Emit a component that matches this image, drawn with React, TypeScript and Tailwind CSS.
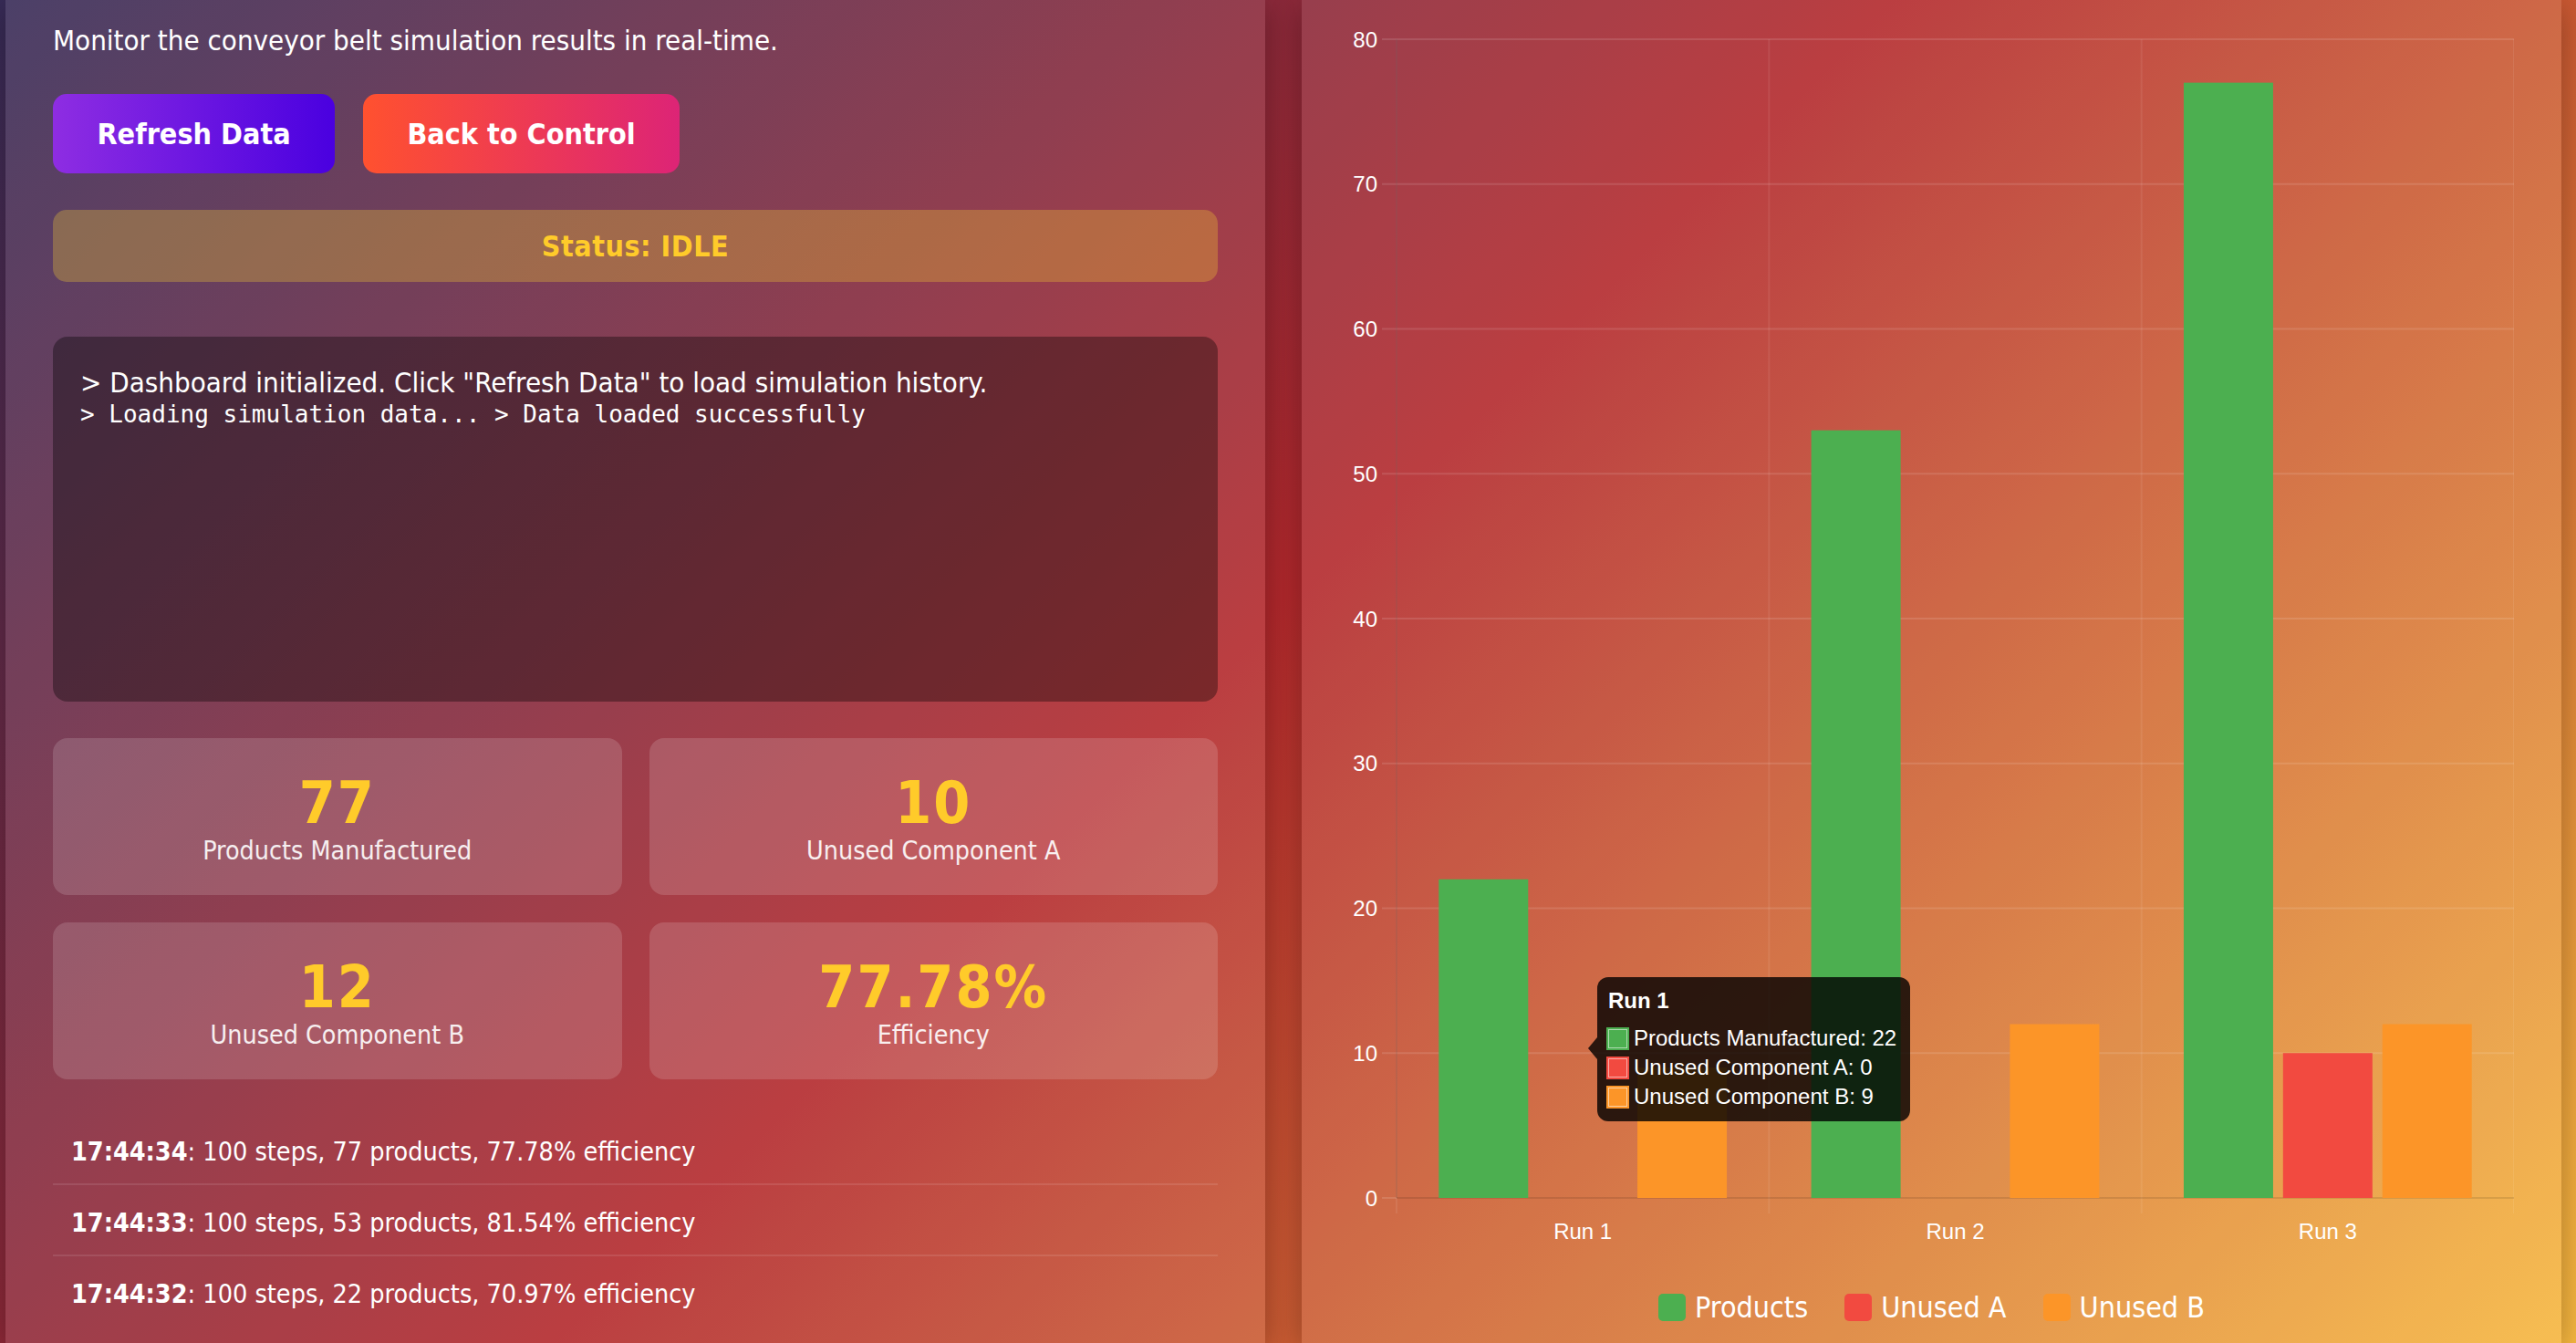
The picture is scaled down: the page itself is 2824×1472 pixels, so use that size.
import React from "react";

const runs = [
  { label: "Run 1", products: 22, a: 0, b: 9 },
  { label: "Run 2", products: 53, a: 0, b: 12 },
  { label: "Run 3", products: 77, a: 10, b: 12 },
];

const history = [
  { time: "17:44:34", steps: 100, products: 77, eff: "77.78" },
  { time: "17:44:33", steps: 100, products: 53, eff: "81.54" },
  { time: "17:44:32", steps: 100, products: 22, eff: "70.97" },
];

const stats = [
  { value: "77", label: "Products Manufactured" },
  { value: "10", label: "Unused Component A" },
  { value: "12", label: "Unused Component B" },
  { value: "77.78%", label: "Efficiency" },
];

const GREEN = "#4caf50";
const RED = "#f24a40";
const ORANGE = "#fc9528";

// chart geometry (svg coordinates)
const W = 1277;
const H = 1404;
const left = 52;
const right = 1277;
const top = 43;
const zero = 1313;
const unit = (zero - top) / 80;
const catW = (right - left) / 3;
const slot = (catW * 0.8) / 3;
const barW = slot * 0.9;

function Chart() {
  const ticks = [0, 10, 20, 30, 40, 50, 60, 70, 80];
  return (
    <svg width={W} height={H} className="block font-['Liberation_Sans',Arial,sans-serif]">
      {[0, 1, 2, 3].map((i) => {
        const x = left + i * catW;
        return (
          <line key={"v" + i} x1={x} x2={x} y1={top} y2={zero + 17} stroke="rgba(255,255,255,0.08)" strokeWidth={2} />
        );
      })}
      {ticks.map((t) => {
        const y = zero - t * unit;
        return (
          <g key={t}>
            <line x1={36} x2={left} y1={y} y2={y} stroke="rgba(255,255,255,0.12)" strokeWidth={2} />
            <line
              x1={left}
              x2={right}
              y1={y}
              y2={y}
              stroke={t === 0 ? "rgba(0,0,0,0.1)" : "rgba(255,255,255,0.12)"}
              strokeWidth={2}
            />
            <text x={31} y={y + 8.5} textAnchor="end" fill="#fff" fontSize={24}>
              {t}
            </text>
          </g>
        );
      })}
      <line x1={left} x2={left} y1={top} y2={zero} stroke="rgba(0,0,0,0.1)" strokeWidth={2} />
      {runs.map((r, i) => {
        const x0 = left + i * catW + catW * 0.1;
        const vals = [
          { v: r.products, c: GREEN },
          { v: r.a, c: RED },
          { v: r.b, c: ORANGE },
        ];
        return (
          <g key={r.label}>
            {vals.map((d, j) =>
              d.v > 0 ? (
                <rect
                  key={j}
                  x={x0 + j * slot + (slot - barW) / 2}
                  y={zero - d.v * unit}
                  width={barW}
                  height={d.v * unit}
                  fill={d.c}
                />
              ) : null
            )}
            <text x={left + (i + 0.5) * catW} y={1358} textAnchor="middle" fill="#fff" fontSize={24}>
              {r.label}
            </text>
          </g>
        );
      })}
    </svg>
  );
}

function TipRow({ color, text }: { color: string; text: string }) {
  return (
    <div className="flex items-center gap-[5px] h-[28px]">
      <span
        className="w-[25px] h-[25px] border-2 shadow-[inset_0_0_0_1px_rgba(255,255,255,0.55)]"
        style={{ backgroundColor: color, borderColor: color }}
      />
      <span>{text}</span>
    </div>
  );
}

function LegendItem({ color, label }: { color: string; label: string }) {
  return (
    <div className="flex items-center gap-[10px]">
      <span className="w-[30px] h-[30px] rounded-[5px]" style={{ backgroundColor: color }} />
      <span className="text-[32px] text-white">{label}</span>
    </div>
  );
}

export default function App() {
  return (
    <div className="h-[1472px] w-full overflow-hidden bg-[linear-gradient(135deg,#372b57_0%,#b2282c_48%,#f6b73f_100%)] font-['DejaVu_Sans_Condensed','DejaVu_Sans',sans-serif] font-stretch-condensed">
      <div className="grid grid-cols-2 gap-[40px] pl-[6px] pr-[16px] h-full">
        {/* left: controls + stats */}
        <div className="bg-white/10 shadow-[0_8px_32px_rgba(0,0,0,0.3)] px-[52px] pt-[20px] flex flex-col">
          <p className="text-[31px] leading-[48px] text-white">
            Monitor the conveyor belt simulation results in real-time.
          </p>
          <div className="mt-[35px] flex gap-[31px]">
            <button className="w-[309px] h-[87px] rounded-[15px] text-[32px] font-bold text-white bg-[linear-gradient(90deg,#8e2de2,#4a00e0)]">
              Refresh Data
            </button>
            <button className="w-[347px] h-[87px] rounded-[15px] text-[32px] font-bold text-white bg-[linear-gradient(90deg,#ff512f,#dd2476)]">
              Back to Control
            </button>
          </div>
          <div className="mt-[40px] h-[79px] rounded-[15px] bg-[rgba(245,205,50,0.3)] flex items-center justify-center text-[32px] font-bold tracking-[0.5px] text-[#ffcb2a]">
            Status: IDLE
          </div>
          <div className="mt-[60px] h-[400px] rounded-[16px] bg-black/35 p-[30px] text-white">
            <div className="text-[31px] leading-[40px]">
              &gt; Dashboard initialized. Click "Refresh Data" to load simulation history.
            </div>
            <div className="font-['DejaVu_Sans_Mono',monospace] text-[26px] leading-[30px]">
              &gt; Loading simulation data... &gt; Data loaded successfully
            </div>
          </div>
          <div className="mt-[40px] grid grid-cols-2 gap-[30px]">
            {stats.map((s) => (
              <div
                key={s.label}
                className="h-[172px] rounded-[16px] bg-white/15 flex flex-col items-center justify-center"
              >
                <div className="text-[64px] leading-[76px] font-bold tracking-[2px] text-[#ffcb2a]">{s.value}</div>
                <div className="text-[28.4px] leading-[30px] text-white/90">{s.label}</div>
              </div>
            ))}
          </div>
          <div className="mt-[38px]">
            {history.map((h) => (
              <div
                key={h.time}
                className="px-[20px] pt-[22px] pb-[14px] text-[28.5px] leading-[40px] text-white border-b-2 border-white/10 last:border-b-0"
              >
                <span className="font-bold">{h.time}</span>: {h.steps} steps, {h.products} products, {h.eff}%
                efficiency
              </div>
            ))}
          </div>
        </div>

        {/* right: chart */}
        <div className="relative bg-white/10 shadow-[0_8px_32px_rgba(0,0,0,0.3)] px-[52px]">
          <Chart />
          <div className="h-[58px] flex items-center justify-center gap-[40px]">
            <LegendItem color={GREEN} label="Products" />
            <LegendItem color={RED} label="Unused A" />
            <LegendItem color={ORANGE} label="Unused B" />
          </div>

          {/* tooltip on Run 1 */}
          <div className="absolute left-[324px] top-[1071px] w-[343px] h-[158px] rounded-[12px] bg-black/80 pl-[10px] pr-[12px] pt-[12px] text-white font-['Liberation_Sans',Arial,sans-serif] text-[24px] leading-[28px]">
            <span className="absolute left-[-10px] top-[66px] w-0 h-0 border-y-[12px] border-y-transparent border-r-[10px] border-r-black/80" />
            <div className="pl-[2px] font-bold mb-[13px]">Run 1</div>
            <div className="flex flex-col gap-[4px]">
              <TipRow color={GREEN} text="Products Manufactured: 22" />
              <TipRow color={RED} text="Unused Component A: 0" />
              <TipRow color={ORANGE} text="Unused Component B: 9" />
            </div>
          </div>
        </div>
      </div>
    </div>
  );
}
